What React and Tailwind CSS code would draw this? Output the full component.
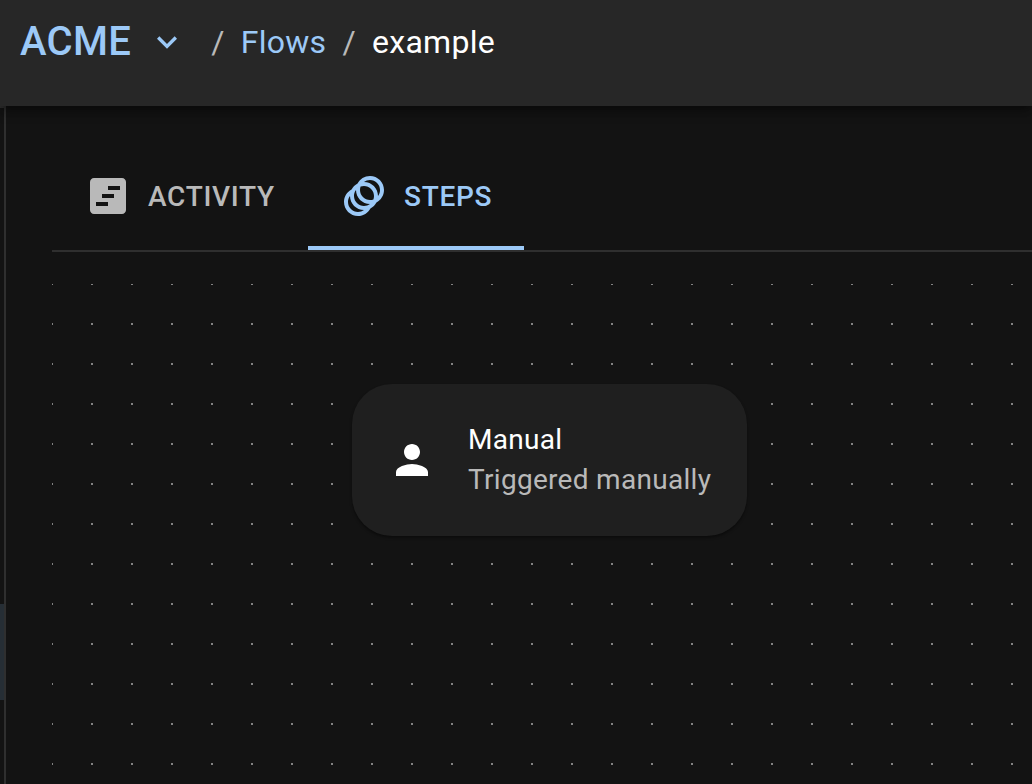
function ChevronDown() {
  return (
    <svg viewBox="0 0 24 24" className="h-10 w-10 fill-[#9cc9f7]">
      <path d="M7.41 8.59 12 13.17l4.59-4.58L18 10l-6 6-6-6z" />
    </svg>
  );
}

function TimelineIcon() {
  return (
    <svg viewBox="0 0 24 24" className="h-12 w-12 shrink-0 fill-current">
      <path d="M19 3H5c-1.1 0-2 .9-2 2v14c0 1.1.9 2 2 2h14c1.1 0 2-.9 2-2V5c0-1.1-.9-2-2-2m-7 14H6v-2h6zm3-4H9v-2h6zm3-4h-6V7h6z" />
    </svg>
  );
}

function StepsIcon() {
  return (
    <svg viewBox="0 0 24 24" className="h-12 w-12 shrink-0 fill-current">
      <path d="M15 2c-2.71 0-5.05 1.54-6.22 3.78-1.28.67-2.34 1.72-3 3C3.54 9.95 2 12.29 2 15c0 3.87 3.13 7 7 7 2.71 0 5.05-1.54 6.22-3.78 1.28-.67 2.34-1.72 3-3C20.46 14.05 22 11.71 22 9c0-3.87-3.13-7-7-7M9 20c-2.76 0-5-2.24-5-5 0-1.12.37-2.16 1-3 0 3.87 3.13 7 7 7-.84.63-1.88 1-3 1m3-3c-2.76 0-5-2.24-5-5 0-1.12.37-2.16 1-3 0 3.86 3.13 6.99 7 7-.84.63-1.88 1-3 1m4.7-3.3c-.53.19-1.1.3-1.7.3-2.76 0-5-2.24-5-5 0-.6.11-1.17.3-1.7.53-.19 1.1-.3 1.7-.3 2.76 0 5 2.24 5 5 0 .6-.11 1.17-.3 1.7M19 12c0-3.86-3.13-6.99-7-7 .84-.63 1.87-1 3-1 2.76 0 5 2.24 5 5 0 1.12-.37 2.16-1 3" />
    </svg>
  );
}

function PersonIcon() {
  return (
    <svg viewBox="0 0 24 24" className="h-12 w-12 shrink-0 fill-white">
      <path d="M12 12c2.21 0 4-1.79 4-4s-1.79-4-4-4-4 1.79-4 4 1.79 4 4 4m0 2c-2.67 0-8 1.34-8 4v2h16v-2c0-2.66-5.33-4-8-4" />
    </svg>
  );
}

function DotGrid() {
  return (
    <svg className="absolute inset-0 h-full w-full">
      <defs>
        <pattern id="dots" x="-20" y="-20" width="40" height="40" patternUnits="userSpaceOnUse">
          <circle cx="20" cy="20" r="1" fill="#a8a8a8" />
        </pattern>
      </defs>
      <rect width="100%" height="100%" fill="url(#dots)" />
    </svg>
  );
}

function Header() {
  return (
    <header className="relative z-10 flex h-[106px] shrink-0 items-start bg-[#272727] pl-5 text-[32px] shadow-[0_4px_8px_-2px_rgba(0,0,0,0.4),0_8px_10px_rgba(0,0,0,0.2)]">
      <div className="flex h-[84px] items-center">
        <span className="text-[40px] font-medium tracking-[0.3px] text-[#9cc9f7]">ACME</span>
        <span className="ml-4">
          <ChevronDown />
        </span>
        <nav className="ml-6 flex items-center tracking-[0.3px]">
          <span className="text-[#b9b9b9]">/</span>
          <a className="ml-4 text-[#9cc9f7]">Flows</a>
          <span className="ml-4 text-[#b9b9b9]">/</span>
          <span className="ml-4 text-white">example</span>
        </nav>
      </div>
    </header>
  );
}

export default function App() {
  return (
    <div className="flex h-[784px] w-[1032px] flex-col overflow-hidden bg-[#131313] font-[Roboto,sans-serif]">
      <Header />
      <div className="flex min-h-0 flex-1">
        <aside className="w-[6px] shrink-0 border-t-2 border-r-2 border-[#2f2f2f] pt-[496px]">
          <div className="h-24 w-1 bg-[#262e35]" />
        </aside>
        <main className="flex min-w-0 flex-1 flex-col pt-9 pl-[46px]">
          <div className="flex h-[110px] shrink-0 border-b-2 border-[#2f2f2f] text-[28px] font-medium tracking-[0.7px]">
            <div className="flex w-64 items-center gap-4 pl-8 text-[#b9b9b9]">
              <TimelineIcon />
              <span className="pt-0.5">ACTIVITY</span>
            </div>
            <div className="flex w-[216px] items-center gap-4 border-b-4 border-[#9cc9f7] pt-1 pl-8 text-[#9cc9f7]">
              <StepsIcon />
              <span className="pt-0.5">STEPS</span>
            </div>
          </div>
          <section className="relative mt-8 flex-1">
            <DotGrid />
            <div className="absolute top-[100px] left-[300px] flex h-[152px] w-[395px] items-center rounded-[40px] bg-[#1f1f1f] pl-9 shadow-[0_2px_3px_rgba(0,0,0,0.4)]">
              <PersonIcon />
              <div className="ml-8 text-[28px] leading-10 tracking-[0.3px] whitespace-nowrap">
                <div className="text-white">Manual</div>
                <div className="text-[#b9b9b9]">Triggered manually</div>
              </div>
            </div>
          </section>
        </main>
      </div>
    </div>
  );
}
